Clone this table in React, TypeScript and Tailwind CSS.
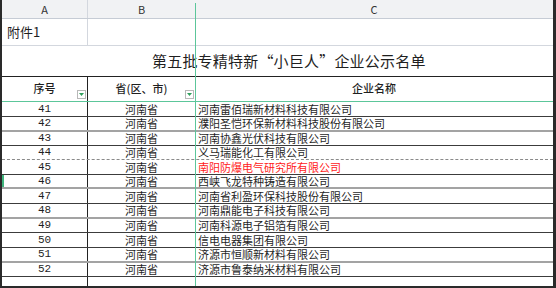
import React from 'react';

const rows = [
  { no: '41', name: '河南雷佰瑞新材料科技有限公司', line: 'dark', h: 'h-[15px]' },
  { no: '42', name: '濮阳圣恺环保新材料科技股份有限公司', line: 'gray', h: 'h-[15px]' },
  { no: '43', name: '河南协鑫光伏科技有限公司', line: 'dark', h: 'h-[14px]' },
  { no: '44', name: '义马瑞能化工有限公司', line: 'dash', h: 'h-[14px]' },
  { no: '45', name: '南阳防爆电气研究所有限公司', line: 'dark', h: 'h-[15px]', red: true },
  { no: '46', name: '西峡飞龙特种铸造有限公司', line: 'gray', h: 'h-[14px]', mark: true },
  { no: '47', name: '河南省利盈环保科技股份有限公司', line: 'dark', h: 'h-[15px]' },
  { no: '48', name: '河南鼎能电子科技有限公司', line: 'gray', h: 'h-[15px]' },
  { no: '49', name: '河南科源电子铝箔有限公司', line: 'dark', h: 'h-[14px]' },
  { no: '50', name: '信电电器集团有限公司', line: 'dark', h: 'h-[15px]' },
  { no: '51', name: '济源市恒顺新材料有限公司', line: 'gray', h: 'h-[15px]' },
  { no: '52', name: '济源市鲁泰纳米材料有限公司', line: 'dark', h: 'h-[14px]' },
];

const lineCls: Record<string, string> = {
  dark: 'border-b border-[#3c3c3c]',
  gray: 'border-b-2 border-[#a3a3a3]',
  dash: 'border-b border-dashed border-[#8a8a8a]',
};

function FilterBtn() {
  return (
    <span className="absolute right-[1px] bottom-[2px] w-[9px] h-[9px] border border-[#b8b8b8] bg-white flex items-center justify-center">
      <svg width="5" height="3" viewBox="0 0 5 3">
        <path d="M0 0 L5 0 L2.5 3 Z" fill="#2e9e5b" />
      </svg>
    </span>
  );
}

export default function App() {
  return (
    <div
      className="relative w-[556px] h-[288px] bg-white overflow-hidden border-l-2 border-r-[3px] border-b-2 border-[#2a2a2a] text-[#1f1f1f]"
      style={{ fontFamily: '"Noto Sans CJK SC", "Noto Sans", sans-serif' }}
    >
      {/* column letters */}
      <div className="grid grid-cols-[86px_107px_1fr] h-[19px] bg-[#f1f2f4] border-b border-[#c6ccd5] text-[11px] text-[#333]">
        <div className="flex items-center justify-center border-r border-[#d3d7de]">A</div>
        <div className="flex items-center justify-center">B</div>
        <div className="flex items-center justify-center">C</div>
      </div>

      {/* 附件1 */}
      <div className="grid grid-cols-[86px_107px_1fr] h-[27px] border-b border-[#d3d7de]">
        <div className="flex items-center pl-[5px] text-[13px] border-r border-[#d3d7de]">附件1</div>
        <div />
        <div />
      </div>

      {/* title */}
      <div className="h-[31px] border-b border-[#222] flex items-center pl-[150px] text-[15px] tracking-[0.2px]">
        第五批专精特新“小巨人”企业公示名单
      </div>

      {/* header */}
      <div className="grid grid-cols-[86px_107px_1fr] h-[25px] border-b border-[#5cc69a] text-[11px] font-medium">
        <div className="relative flex items-center justify-center border-r border-[#222] pb-[2px]">
          序号
          <FilterBtn />
        </div>
        <div className="relative flex items-center justify-center pb-[2px]">
          省(区、市)
          <FilterBtn />
        </div>
        <div className="flex items-center justify-center pb-[2px]">企业名称</div>
      </div>

      {/* data */}
      {rows.map((r) => (
        <div
          key={r.no}
          className={`relative grid grid-cols-[86px_107px_1fr] ${r.h} ${lineCls[r.line]} text-[11px] leading-none`}
        >
          {r.mark && <span className="absolute left-0 top-0 bottom-0 w-[2px] bg-[#3fb57d]" />}
          <div className="flex items-center justify-center border-r border-[#222]" style={{ fontFamily: '"Liberation Mono", monospace' }}>
            {r.no}
          </div>
          <div className="flex items-center justify-center">河南省</div>
          <div className={`flex items-center pl-[3px] ${r.red ? 'text-[#ff1a1a]' : ''}`}>{r.name}</div>
        </div>
      ))}

      {/* empty row */}
      <div className="grid grid-cols-[86px_107px_1fr] h-[9px]">
        <div className="border-r border-[#222]" />
        <div />
        <div />
      </div>

      {/* freeze pane line */}
      <span className="absolute left-[193px] top-[3px] bottom-0 w-px bg-[#5cc69a]" />
    </div>
  );
}
